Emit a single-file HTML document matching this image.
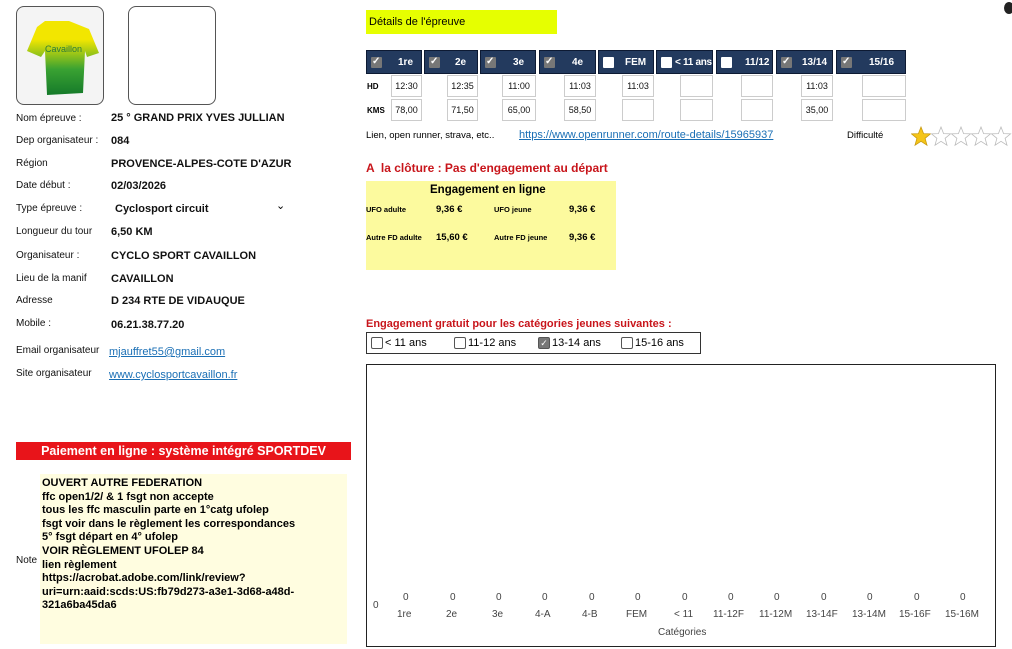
<!DOCTYPE html>
<html><head><meta charset="utf-8"><style>
body{margin:0;width:1012px;height:649px;background:#fff;font-family:"Liberation Sans",sans-serif;position:relative;overflow:hidden}
.a{position:absolute;white-space:nowrap}
.lbl{font-size:10px;color:#111}
.val{font-size:11px;font-weight:bold;color:#111}
.hc{position:absolute;top:50px;height:24px;background:#233a5e;border:1px solid #0d1a33;box-sizing:border-box;color:#fff;font-size:10px;font-weight:bold;overflow:hidden}
.hc span.t{position:absolute;top:6px;line-height:12px;white-space:nowrap}
.cb{position:absolute;left:4px;top:6px;width:11px;height:11px;background:#fff;border-radius:1px}
.cb.on{background:#777}
.cb.on:after{content:"✓";position:absolute;left:1px;top:-1px;color:#fff;font-size:10px;line-height:11px}
.ib{position:absolute;height:22px;border:1px solid #ccc;box-sizing:border-box;font-size:9px;text-align:center;line-height:20px;color:#111}
.red{color:#c8151b;font-weight:bold}
.ch{font-size:10px;color:#444}
</style></head><body>
<div class="a" style="left:16px;top:6px;width:86px;height:97px;border:1px solid #555;border-radius:8px;overflow:hidden;background:#f4f4f4">
<svg width="86" height="97"><defs><linearGradient id="g" x1="0" y1="0" x2="0" y2="1"><stop offset="0.25" stop-color="#f2e600"/><stop offset="0.65" stop-color="#3aa232"/><stop offset="1" stop-color="#157a2a"/></linearGradient></defs><path d="M28 14 L52 14 L72 22 L82 46 L70 50 L68 44 L66 86 L30 88 L28 44 L24 50 L10 44 L20 20 Z" fill="url(#g)"/><text x="28" y="45" font-size="9" fill="#2a7a3a" font-family="Liberation Sans">Cavaillon</text></svg></div>
<div class="a" style="left:128px;top:6px;width:86px;height:97px;border:1px solid #555;border-radius:8px"></div>

<div class="a lbl" style="left:16px;top:113px">Nom épreuve :</div><div class="a val" style="left:111px;top:112px">25 ° GRAND PRIX YVES JULLIAN</div>
<div class="a lbl" style="left:16px;top:135px">Dep organisateur :</div><div class="a val" style="left:111px;top:135px">084</div>
<div class="a lbl" style="left:16px;top:158px">Région</div><div class="a val" style="left:111px;top:158px">PROVENCE-ALPES-COTE D'AZUR</div>
<div class="a lbl" style="left:16px;top:180px">Date début :</div><div class="a val" style="left:111px;top:180px">02/03/2026</div>
<div class="a lbl" style="left:16px;top:203px">Type épreuve :</div><div class="a val" style="left:115px;top:203px">Cyclosport circuit</div><div class="a" style="left:276px;top:199px;font-size:11px">⌄</div>
<div class="a lbl" style="left:16px;top:226px">Longueur du tour</div><div class="a val" style="left:111px;top:226px">6,50 KM</div>
<div class="a lbl" style="left:16px;top:250px">Organisateur :</div><div class="a val" style="left:111px;top:250px">CYCLO SPORT CAVAILLON</div>
<div class="a lbl" style="left:16px;top:273px">Lieu de la manif</div><div class="a val" style="left:111px;top:273px">CAVAILLON</div>
<div class="a lbl" style="left:16px;top:295px">Adresse</div><div class="a val" style="left:111px;top:295px">D 234 RTE DE VIDAUQUE</div>
<div class="a lbl" style="left:16px;top:318px">Mobile :</div><div class="a val" style="left:111px;top:319px">06.21.38.77.20</div>
<div class="a lbl" style="left:16px;top:345px">Email organisateur</div><div class="a" style="left:109px;top:346px;font-size:11px;color:#1a6fb5;text-decoration:underline">mjauffret55@gmail.com</div>
<div class="a lbl" style="left:16px;top:368px">Site organisateur</div><div class="a" style="left:109px;top:369px;font-size:11px;color:#1a6fb5;text-decoration:underline">www.cyclosportcavaillon.fr</div>

<div class="a" style="left:16px;top:442px;width:335px;height:18px;background:#e8141a;color:#fff;font-weight:bold;font-size:12.5px;text-align:center;line-height:18px">Paiement en ligne : système intégré SPORTDEV</div>
<div class="a lbl" style="left:16px;top:555px">Note</div>
<div class="a" style="left:40px;top:474px;width:307px;height:170px;background:#fffde0;font-size:11px;font-weight:bold;line-height:13.6px;padding:3px 2px;box-sizing:border-box;white-space:normal">OUVERT AUTRE FEDERATION<br>ffc open1/2/ &amp; 1 fsgt non accepte<br>tous les ffc masculin parte en 1°catg ufolep<br>fsgt voir dans le règlement les correspondances<br>5° fsgt départ en 4° ufolep<br>VOIR RÈGLEMENT UFOLEP 84<br>lien règlement<br>https://acrobat.adobe.com/link/review?<br>uri=urn:aaid:scds:US:fb79d273-a3e1-3d68-a48d-<br>321a6ba45da6</div>

<div class="a" style="left:366px;top:10px;width:191px;height:24px;background:#e6ff00;font-size:11px;line-height:24px;padding-left:3px;box-sizing:border-box">Détails de l'épreuve</div>
<div class="a" style="left:1004px;top:2px;width:10px;height:12px;border-radius:50%;background:#222"></div>

<div class="hc" style="left:366px;width:56px"><span class="cb on"></span><span class="t" style="left:31px">1re</span></div>
<div class="hc" style="left:424px;width:54px"><span class="cb on"></span><span class="t" style="left:30px">2e</span></div>
<div class="hc" style="left:480px;width:56px"><span class="cb on"></span><span class="t" style="left:32px">3e</span></div>
<div class="hc" style="left:539px;width:57px"><span class="cb on"></span><span class="t" style="left:32px">4e</span></div>
<div class="hc" style="left:598px;width:56px"><span class="cb"></span><span class="t" style="left:26px">FEM</span></div>
<div class="hc" style="left:656px;width:57px"><span class="cb"></span><span class="t" style="left:18px;letter-spacing:-0.3px">&lt; 11 ans</span></div>
<div class="hc" style="left:716px;width:57px"><span class="cb"></span><span class="t" style="left:28px">11/12</span></div>
<div class="hc" style="left:776px;width:57px"><span class="cb on"></span><span class="t" style="left:25px">13/14</span></div>
<div class="hc" style="left:836px;width:70px"><span class="cb on"></span><span class="t" style="left:32px">15/16</span></div>

<div class="a" style="left:367px;top:82px;font-size:8px;font-weight:bold">HD</div>
<div class="a" style="left:367px;top:106px;font-size:8px;font-weight:bold">KMS</div>
<div class="ib" style="left:391px;top:75px;width:31px">12:30</div><div class="ib" style="left:391px;top:99px;width:31px">78,00</div>
<div class="ib" style="left:447px;top:75px;width:31px">12:35</div><div class="ib" style="left:447px;top:99px;width:31px">71,50</div>
<div class="ib" style="left:502px;top:75px;width:34px">11:00</div><div class="ib" style="left:502px;top:99px;width:34px">65,00</div>
<div class="ib" style="left:564px;top:75px;width:32px">11:03</div><div class="ib" style="left:564px;top:99px;width:32px">58,50</div>
<div class="ib" style="left:622px;top:75px;width:32px">11:03</div><div class="ib" style="left:622px;top:99px;width:32px"></div>
<div class="ib" style="left:680px;top:75px;width:33px"></div><div class="ib" style="left:680px;top:99px;width:33px"></div>
<div class="ib" style="left:741px;top:75px;width:32px"></div><div class="ib" style="left:741px;top:99px;width:32px"></div>
<div class="ib" style="left:801px;top:75px;width:32px">11:03</div><div class="ib" style="left:801px;top:99px;width:32px">35,00</div>
<div class="ib" style="left:862px;top:75px;width:44px"></div><div class="ib" style="left:862px;top:99px;width:44px"></div>

<div class="a" style="left:366px;top:130px;font-size:9.5px">Lien, open runner, strava, etc..</div>
<div class="a" style="left:519px;top:129px;font-size:11px;color:#1a6fb5;text-decoration:underline">https://www.openrunner.com/route-details/15965937</div>
<div class="a" style="left:847px;top:130px;font-size:9.5px">Difficulté</div>
<svg class="a" style="left:911px;top:126px" width="101" height="22" viewBox="0 0 101 22">
<defs><path id="s" d="M10 1 L12.6 7.6 L19.5 7.9 L14.1 12.3 L16 19.2 L10 15.3 L4 19.2 L5.9 12.3 L0.5 7.9 L7.4 7.6 Z"/></defs>
<use href="#s" x="0" fill="#f5c518" stroke="#c89a10" stroke-width="0.8"/>
<use href="#s" x="20" fill="#fff" stroke="#bbb" stroke-width="0.8"/>
<use href="#s" x="40" fill="#fff" stroke="#bbb" stroke-width="0.8"/>
<use href="#s" x="60" fill="#fff" stroke="#bbb" stroke-width="0.8"/>
<use href="#s" x="80" fill="#fff" stroke="#bbb" stroke-width="0.8"/>
</svg>

<div class="a red" style="left:366px;top:161px;font-size:12px">A &nbsp;la clôture : Pas d'engagement au départ</div>
<div class="a" style="left:366px;top:181px;width:250px;height:89px;background:#fcfa9e"></div>
<div class="a" style="left:430px;top:184px;font-size:11.5px;font-weight:bold">Engagement en ligne</div>
<div class="a" style="left:366px;top:205px;font-size:7.5px;font-weight:bold">UFO adulte</div><div class="a" style="left:436px;top:204px;font-size:9.5px;font-weight:bold">9,36 €</div>
<div class="a" style="left:494px;top:205px;font-size:7.5px;font-weight:bold">UFO jeune</div><div class="a" style="left:569px;top:204px;font-size:9.5px;font-weight:bold">9,36 €</div>
<div class="a" style="left:366px;top:233px;font-size:7.5px;font-weight:bold">Autre FD adulte</div><div class="a" style="left:436px;top:232px;font-size:9.5px;font-weight:bold">15,60 €</div>
<div class="a" style="left:494px;top:233px;font-size:7.5px;font-weight:bold">Autre FD jeune</div><div class="a" style="left:569px;top:232px;font-size:9.5px;font-weight:bold">9,36 €</div>

<div class="a red" style="left:366px;top:318px;font-size:11px">Engagement gratuit pour les catégories jeunes suivantes :</div>
<div class="a" style="left:366px;top:332px;width:335px;height:22px;border:1px solid #333;box-sizing:border-box;font-size:11px;line-height:20px">
<span class="a" style="left:4px;top:4px;width:10px;height:10px;border:1px solid #555;border-radius:2px"></span><span class="a" style="left:18px">&lt; 11 ans</span>
<span class="a" style="left:87px;top:4px;width:10px;height:10px;border:1px solid #555;border-radius:2px"></span><span class="a" style="left:101px">11-12 ans</span>
<span class="a" style="left:171px;top:4px;width:10px;height:10px;border:1px solid #555;border-radius:2px;background:#777;color:#fff;font-size:9px;line-height:10px;text-align:center">✓</span><span class="a" style="left:185px">13-14 ans</span>
<span class="a" style="left:254px;top:4px;width:10px;height:10px;border:1px solid #555;border-radius:2px"></span><span class="a" style="left:268px">15-16 ans</span>
</div>

<div class="a" style="left:366px;top:364px;width:630px;height:283px;border:1px solid #222;box-sizing:border-box"></div>
<div class="a ch" style="left:373px;top:600px">0</div>
<div class="a ch" style="left:380px;top:592px;width:600px;height:30px">
<span class="a" style="left:23px;top:0">0</span><span class="a" style="left:17px;top:17px">1re</span>
<span class="a" style="left:70px;top:0">0</span><span class="a" style="left:66px;top:17px">2e</span>
<span class="a" style="left:116px;top:0">0</span><span class="a" style="left:112px;top:17px">3e</span>
<span class="a" style="left:162px;top:0">0</span><span class="a" style="left:155px;top:17px">4-A</span>
<span class="a" style="left:209px;top:0">0</span><span class="a" style="left:202px;top:17px">4-B</span>
<span class="a" style="left:255px;top:0">0</span><span class="a" style="left:246px;top:17px">FEM</span>
<span class="a" style="left:302px;top:0">0</span><span class="a" style="left:294px;top:17px">&lt; 11</span>
<span class="a" style="left:348px;top:0">0</span><span class="a" style="left:333px;top:17px">11-12F</span>
<span class="a" style="left:394px;top:0">0</span><span class="a" style="left:379px;top:17px">11-12M</span>
<span class="a" style="left:441px;top:0">0</span><span class="a" style="left:426px;top:17px">13-14F</span>
<span class="a" style="left:487px;top:0">0</span><span class="a" style="left:472px;top:17px">13-14M</span>
<span class="a" style="left:534px;top:0">0</span><span class="a" style="left:519px;top:17px">15-16F</span>
<span class="a" style="left:580px;top:0">0</span><span class="a" style="left:565px;top:17px">15-16M</span>
</div>
<div class="a ch" style="left:658px;top:627px">Catégories</div>
</body></html>
